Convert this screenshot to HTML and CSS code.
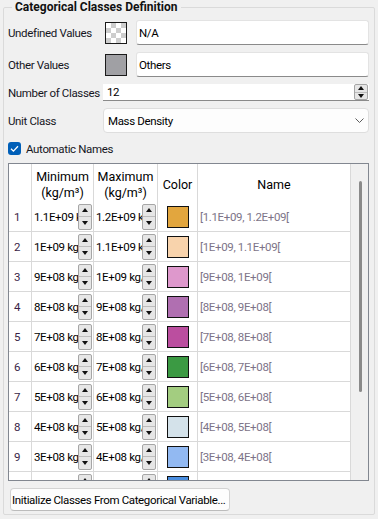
FILE: index.html
```html
<html>
<head>
    <title>Categorical Classes Definition</title>
    <link rel="stylesheet" href="styles.css">
</head>
<body>
    <fieldset class="group">
        <legend class="group-title">Categorical Classes Definition</legend>
        <div class="group-body">
            <div class="form-row tall">
                <span class="label">Undefined Values</span>
                <span class="swatch-btn checker"></span>
                <div class="line-edit">N/A</div>
            </div>
            <div class="form-row tall">
                <span class="label">Other Values</span>
                <span class="swatch-btn other"></span>
                <div class="line-edit">Others</div>
            </div>
            <div class="form-row short">
                <span class="label">Number of Classes</span>
                <div class="spin-edit">
                    <span class="spin-text">12</span>
                    <span class="spinner small"><span class="up"></span><span class="down"></span></span>
                </div>
            </div>
            <div class="form-row tall">
                <span class="label">Unit Class</span>
                <div class="combo">
                    <span>Mass Density</span>
                    <svg class="chevron" width="9" height="6" viewBox="0 0 9 6"><path d="M0.5 0.5 L4.5 4.5 L8.5 0.5" fill="none" stroke="#5c5c5c" stroke-width="1"/></svg>
                </div>
            </div>
            <div class="check-row">
                <span class="checkbox">
                    <svg width="13" height="13" viewBox="0 0 13 13"><path d="M3 6.8 L5.4 9.1 L10 4.2" fill="none" stroke="#fff" stroke-width="1.3"/></svg>
                </span>
                <span>Automatic Names</span>
            </div>

            <div class="table-frame">
                <div class="table-grid">
                    <div class="cell head"></div>
                    <div class="cell head">Minimum<br>(kg/m³)</div>
                    <div class="cell head">Maximum<br>(kg/m³)</div>
                    <div class="cell head">Color</div>
                    <div class="cell head">Name</div>

                    <div class="cell num">1</div>
                    <div class="cell value"><span class="value-text">1.1E+09 kg/m³</span><span class="spinner"><span class="up"></span><span class="down"></span></span></div>
                    <div class="cell value"><span class="value-text">1.2E+09 kg/m³</span><span class="spinner"><span class="up"></span><span class="down"></span></span></div>
                    <div class="cell color"><span class="swatch" style="background:#e2a63e"></span></div>
                    <div class="cell name">[1.1E+09, 1.2E+09[</div>

                    <div class="cell num">2</div>
                    <div class="cell value"><span class="value-text">1E+09 kg/m³</span><span class="spinner"><span class="up"></span><span class="down"></span></span></div>
                    <div class="cell value"><span class="value-text">1.1E+09 kg/m³</span><span class="spinner"><span class="up"></span><span class="down"></span></span></div>
                    <div class="cell color"><span class="swatch" style="background:#f8d3ac"></span></div>
                    <div class="cell name">[1E+09, 1.1E+09[</div>

                    <div class="cell num">3</div>
                    <div class="cell value"><span class="value-text">9E+08 kg/m³</span><span class="spinner"><span class="up"></span><span class="down"></span></span></div>
                    <div class="cell value"><span class="value-text">1E+09 kg/m³</span><span class="spinner"><span class="up"></span><span class="down"></span></span></div>
                    <div class="cell color"><span class="swatch" style="background:#de98cc"></span></div>
                    <div class="cell name">[9E+08, 1E+09[</div>

                    <div class="cell num">4</div>
                    <div class="cell value"><span class="value-text">8E+08 kg/m³</span><span class="spinner"><span class="up"></span><span class="down"></span></span></div>
                    <div class="cell value"><span class="value-text">9E+08 kg/m³</span><span class="spinner"><span class="up"></span><span class="down"></span></span></div>
                    <div class="cell color"><span class="swatch" style="background:#b06fb1"></span></div>
                    <div class="cell name">[8E+08, 9E+08[</div>

                    <div class="cell num">5</div>
                    <div class="cell value"><span class="value-text">7E+08 kg/m³</span><span class="spinner"><span class="up"></span><span class="down"></span></span></div>
                    <div class="cell value"><span class="value-text">8E+08 kg/m³</span><span class="spinner"><span class="up"></span><span class="down"></span></span></div>
                    <div class="cell color"><span class="swatch" style="background:#bb4e9f"></span></div>
                    <div class="cell name">[7E+08, 8E+08[</div>

                    <div class="cell num">6</div>
                    <div class="cell value"><span class="value-text">6E+08 kg/m³</span><span class="spinner"><span class="up"></span><span class="down"></span></span></div>
                    <div class="cell value"><span class="value-text">7E+08 kg/m³</span><span class="spinner"><span class="up"></span><span class="down"></span></span></div>
                    <div class="cell color"><span class="swatch" style="background:#3b9a43"></span></div>
                    <div class="cell name">[6E+08, 7E+08[</div>

                    <div class="cell num">7</div>
                    <div class="cell value"><span class="value-text">5E+08 kg/m³</span><span class="spinner"><span class="up"></span><span class="down"></span></span></div>
                    <div class="cell value"><span class="value-text">6E+08 kg/m³</span><span class="spinner"><span class="up"></span><span class="down"></span></span></div>
                    <div class="cell color"><span class="swatch" style="background:#a3cd80"></span></div>
                    <div class="cell name">[5E+08, 6E+08[</div>

                    <div class="cell num">8</div>
                    <div class="cell value"><span class="value-text">4E+08 kg/m³</span><span class="spinner"><span class="up"></span><span class="down"></span></span></div>
                    <div class="cell value"><span class="value-text">5E+08 kg/m³</span><span class="spinner"><span class="up"></span><span class="down"></span></span></div>
                    <div class="cell color"><span class="swatch" style="background:#d4e2ea"></span></div>
                    <div class="cell name">[4E+08, 5E+08[</div>

                    <div class="cell num">9</div>
                    <div class="cell value"><span class="value-text">3E+08 kg/m³</span><span class="spinner"><span class="up"></span><span class="down"></span></span></div>
                    <div class="cell value"><span class="value-text">4E+08 kg/m³</span><span class="spinner"><span class="up"></span><span class="down"></span></span></div>
                    <div class="cell color"><span class="swatch" style="background:#92b9f2"></span></div>
                    <div class="cell name">[3E+08, 4E+08[</div>

                    <div class="cell num">10</div>
                    <div class="cell value"><span class="value-text">2E+08 kg/m³</span><span class="spinner"><span class="up"></span><span class="down"></span></span></div>
                    <div class="cell value"><span class="value-text">3E+08 kg/m³</span><span class="spinner"><span class="up"></span><span class="down"></span></span></div>
                    <div class="cell color"><span class="swatch" style="background:#4a8ee0"></span></div>
                    <div class="cell name">[2E+08, 3E+08[</div>
                </div>
                <div class="scrollbar"><span class="thumb"></span></div>
            </div>

            <div class="button-row">
                <div class="push-button">Initialize Classes From Categorical Variable...</div>
            </div>
        </div>
    </fieldset>
</body>
</html>
```

FILE: styles.css
```css
* {
    box-sizing: border-box;
}

body {
    margin: 0;
    width: 378px;
    height: 519px;
    overflow: hidden;
    background: #f0f0f0;
    font-family: Roboto, "Liberation Sans", sans-serif;
    font-size: 11.5px;
    letter-spacing: -0.35px;
    color: #16161e;
}

.group {
    margin: 0 3px;
    padding: 5px 5px 3px 4px;
    border: 1px solid #dadada;
    border-radius: 2px;
    min-width: 0;
}

.group-title {
    margin-left: 4px;
    padding: 0 3px;
    font-size: 12px;
    font-weight: bold;
    letter-spacing: 0;
    line-height: 15px;
    color: #111;
}

.group-body {
    display: flex;
    flex-direction: column;
    gap: 7px;
}

.form-row {
    display: flex;
    align-items: center;
    white-space: nowrap;
}

.form-row.tall {
    height: 25px;
}

.form-row.short {
    height: 17px;
}

.label {
    width: 95px;
    flex: none;
}

.swatch-btn {
    width: 22px;
    height: 22px;
    margin: 0 9px 0 2px;
    border: 1px solid #1a1a1a;
    flex: none;
}

.swatch-btn.checker {
    background: repeating-conic-gradient(#cdcdcd 0 25%, #ffffff 0 50%) 0 0 / 10px 10px;
}

.swatch-btn.other {
    background: #a0a0a4;
}

.line-edit {
    flex: 1;
    height: 25px;
    padding: 0 2px;
    display: flex;
    align-items: center;
    background: #fff;
    border: 1px solid #e3e3e3;
    border-bottom-color: #8a8a8a;
    border-radius: 3px;
    color: #000;
}

.spin-edit {
    flex: 1;
    height: 17px;
    display: flex;
    align-items: center;
    padding-left: 4px;
    background: #fff;
    border-bottom: 1px solid #8a8a8a;
    color: #000;
}

.spin-text {
    flex: 1;
}

.combo {
    flex: 1;
    height: 25px;
    display: flex;
    align-items: center;
    justify-content: space-between;
    padding: 0 4px 0 4px;
    background: #fdfdfd;
    border: 1px solid #dedede;
    border-radius: 4px;
    color: #000;
}

.check-row {
    margin-top: 2px;
    height: 13px;
    display: flex;
    align-items: center;
    gap: 5px;
}

.checkbox {
    width: 13px;
    height: 13px;
    border-radius: 3px;
    background: #005fb8;
    display: flex;
}

.table-frame {
    margin-top: 1px;
    height: 318px;
    display: flex;
    border: 1px solid #828790;
    background: #fff;
    overflow: hidden;
}

.table-grid {
    display: grid;
    grid-template-columns: 23px 62px 64px 40px 153px;
    grid-template-rows: 38px;
    grid-auto-rows: 30px;
    align-content: start;
}

.cell {
    border-right: 1px solid #d9d9d9;
    border-bottom: 1px solid #d9d9d9;
    display: flex;
    align-items: center;
    overflow: hidden;
    white-space: nowrap;
}

.cell.head {
    padding-top: 3px;
    border-bottom: none;
    justify-content: center;
    text-align: center;
    line-height: 16px;
    font-size: 12.5px;
    letter-spacing: 0;
    color: #000;
}

.cell.num {
    padding-left: 5px;
    color: #3a1f48;
}

.cell.value {
    padding: 0 1px 0 2px;
    color: #000;
}

.value-text {
    flex: 1;
    overflow: hidden;
}

.spinner {
    width: 14px;
    height: 26px;
    flex: none;
    display: flex;
    flex-direction: column;
    border: 1px solid #a6a6a6;
    border-radius: 2px;
    background: #e6e6e6;
}

.spinner.small {
    height: 16px;
    margin-right: 1px;
}

.spinner .up,
.spinner .down {
    flex: 1;
    display: flex;
    align-items: center;
    justify-content: center;
}

.spinner .down {
    border-top: 1px solid #bdbdbd;
}

.spinner .up::after {
    content: "";
    border-left: 3px solid transparent;
    border-right: 3px solid transparent;
    border-bottom: 4px solid #111;
}

.spinner .down::after {
    content: "";
    border-left: 3px solid transparent;
    border-right: 3px solid transparent;
    border-top: 4px solid #111;
}

.cell.color {
    justify-content: center;
}

.swatch {
    width: 22px;
    height: 22px;
    border: 1px solid #111;
}

.cell.name {
    padding-left: 2px;
    color: #7d7488;
}

.scrollbar {
    flex: 1;
    background: #f0f0f0;
    padding: 17px 0 0 8px;
}

.thumb {
    display: block;
    width: 3px;
    height: 211px;
    border-radius: 2px;
    background: #8a8a8a;
}

.button-row {
    display: flex;
}

.push-button {
    margin-left: 2px;
    height: 23px;
    padding: 0 3px 0 1px;
    display: flex;
    align-items: center;
    background: #fdfdfd;
    border: 1px solid #d3d3d3;
    border-bottom-color: #bcbcbc;
    border-radius: 4px;
    color: #000;
}
```
